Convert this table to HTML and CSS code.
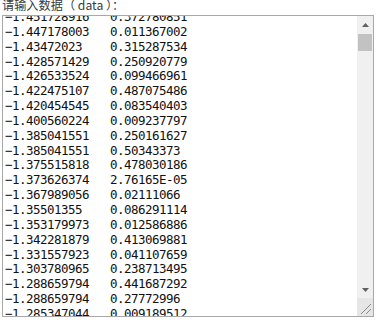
FILE: index.html
```html
<!DOCTYPE html>
<html lang="zh">
<head>
<meta charset="utf-8">
<link rel="stylesheet" href="styles.css">
</head>
<body>
<div class="label">请输入数据（ data ）：</div>
<div class="box">
  <div class="content">
    <div class="rows">
      <div class="row"><span>−1.451728916</span><span>0.372780851</span></div>
      <div class="row"><span>−1.447178003</span><span>0.011367002</span></div>
      <div class="row"><span>−1.43472023</span><span>0.315287534</span></div>
      <div class="row"><span>−1.428571429</span><span>0.250920779</span></div>
      <div class="row"><span>−1.426533524</span><span>0.099466961</span></div>
      <div class="row"><span>−1.422475107</span><span>0.487075486</span></div>
      <div class="row"><span>−1.420454545</span><span>0.083540403</span></div>
      <div class="row"><span>−1.400560224</span><span>0.009237797</span></div>
      <div class="row"><span>−1.385041551</span><span>0.250161627</span></div>
      <div class="row"><span>−1.385041551</span><span>0.50343373</span></div>
      <div class="row"><span>−1.375515818</span><span>0.478030186</span></div>
      <div class="row"><span>−1.373626374</span><span>2.76165E-05</span></div>
      <div class="row"><span>−1.367989056</span><span>0.02111066</span></div>
      <div class="row"><span>−1.35501355</span><span>0.086291114</span></div>
      <div class="row"><span>−1.353179973</span><span>0.012586886</span></div>
      <div class="row"><span>−1.342281879</span><span>0.413069881</span></div>
      <div class="row"><span>−1.331557923</span><span>0.041107659</span></div>
      <div class="row"><span>−1.303780965</span><span>0.238713495</span></div>
      <div class="row"><span>−1.288659794</span><span>0.441687292</span></div>
      <div class="row"><span>−1.288659794</span><span>0.27772996</span></div>
      <div class="row"><span>−1.285347044</span><span>0.009189512</span></div>
    </div>
  </div>
  <div class="scrollbar">
    <div class="arrow">
      <svg width="7" height="4" viewBox="0 0 7 4"><polygon points="3.5,0 7,4 0,4" fill="#606060"/></svg>
    </div>
    <div class="thumb"></div>
    <div class="track"></div>
    <div class="arrow">
      <svg width="7" height="4" viewBox="0 0 7 4"><polygon points="0,0 7,0 3.5,4" fill="#606060"/></svg>
    </div>
    <div class="corner">
      <svg width="16" height="16" viewBox="0 0 16 16"><line x1="14" y1="4" x2="4" y2="14" stroke="#8a8a8a" stroke-width="1"/><line x1="14" y1="9" x2="9" y2="14" stroke="#8a8a8a" stroke-width="1"/></svg>
    </div>
  </div>
</div>
</body>
</html>
```
FILE: styles.css
```css
html, body {
  margin: 0;
  padding: 0;
  background: #ffffff;
}
body {
  width: 386px;
  height: 324px;
  overflow: hidden;
}
.label {
  font-family: "Noto Sans CJK SC", "Noto Sans", sans-serif;
  font-size: 12.2px;
  line-height: 14px;
  height: 17px;
  margin-top: -2px;
  padding-left: 2px;
  color: #3a3a3a;
  white-space: pre;
  box-sizing: border-box;
}
.box {
  margin-left: 2px;
  width: 372px;
  height: 302px;
  border: 1px solid #a8a8a8;
  box-sizing: border-box;
  display: flex;
  background: #ffffff;
}
.content {
  flex: 1;
  overflow: hidden;
  padding-left: 2px;
}
.rows {
  margin-top: -6px;
}
.row {
  display: grid;
  grid-template-columns: 105px auto;
  height: 14.85px;
  line-height: 14.85px;
  font-family: "DejaVu Sans Mono", "Liberation Mono", monospace;
  font-size: 12.5px;
  letter-spacing: -0.53px;
  color: #111111;
  white-space: pre;
}
.scrollbar {
  width: 16px;
  background: #f0f0f0;
  display: flex;
  flex-direction: column;
}
.arrow {
  height: 17px;
  display: flex;
  align-items: center;
  justify-content: center;
}
.thumb {
  height: 17px;
  margin: 1px 1px 0;
  background: #c2c2c2;
}
.track {
  flex: 1;
}
.corner {
  height: 18px;
  background: #e6e6e6;
  display: flex;
  align-items: flex-end;
  justify-content: flex-end;
}
```
